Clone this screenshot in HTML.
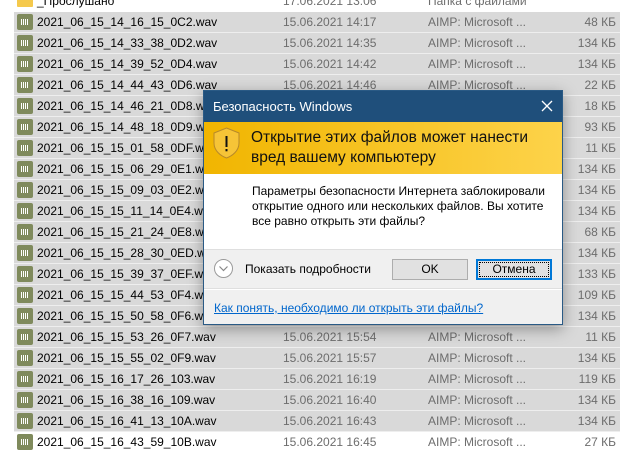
<!DOCTYPE html>
<html><head><meta charset="utf-8"><style>
*{margin:0;padding:0;box-sizing:border-box}
body{width:632px;height:450px;overflow:hidden;background:#fff;font-family:"Liberation Sans",sans-serif;font-size:12px;position:relative}
.row{position:absolute;left:14px;width:606px;height:21px;background:#d9d9d9;border-bottom:1px solid #eeeeee}
.row.w{background:#fff;border:none}
.row span{position:absolute;top:3px;white-space:nowrap}
.ic{position:absolute;left:3px;top:2px;width:16px;height:16px;background:#7f8a5c;border-radius:2px}
.ic:after{content:"";position:absolute;left:4px;top:5px;width:8px;height:6px;background:repeating-linear-gradient(90deg,#fff 0 1px,transparent 1px 2px)}
.n{left:23px;color:#000}
.d{left:269px;color:#6d6d6d}
.t{left:414px;color:#6d6d6d}
.s{right:4px;color:#6d6d6d}
.dlg{position:absolute;left:203px;top:90px;width:360px;height:235px;background:#fff;border:1px solid #2a5a85;box-shadow:0 4px 14px rgba(0,0,0,.35)}
</style></head><body>
<div class="row w" style="top:-9px"><div style="position:absolute;left:3px;top:3px;width:16px;height:13px;background:#f5c94c;border-radius:1px"></div><span class="n">_Прослушано</span><span class="d">17.06.2021 13:06</span><span class="t">Папка с файлами</span></div>
<div id="rows"></div>
<script>
var r=[["2021_06_15_14_16_15_0C2.wav","14:17","48 КБ"],["2021_06_15_14_33_38_0D2.wav","14:35","134 КБ"],["2021_06_15_14_39_52_0D4.wav","14:42","134 КБ"],["2021_06_15_14_44_43_0D6.wav","14:46","22 КБ"],["2021_06_15_14_46_21_0D8.wav","14:46","18 КБ"],["2021_06_15_14_48_18_0D9.wav","14:50","93 КБ"],["2021_06_15_15_01_58_0DF.wav","15:02","11 КБ"],["2021_06_15_15_06_29_0E1.wav","15:08","134 КБ"],["2021_06_15_15_09_03_0E2.wav","15:10","134 КБ"],["2021_06_15_15_11_14_0E4.wav","15:13","134 КБ"],["2021_06_15_15_21_24_0E8.wav","15:22","68 КБ"],["2021_06_15_15_28_30_0ED.wav","15:30","134 КБ"],["2021_06_15_15_39_37_0EF.wav","15:41","133 КБ"],["2021_06_15_15_44_53_0F4.wav","15:46","109 КБ"],["2021_06_15_15_50_58_0F6.wav","15:52","134 КБ"],["2021_06_15_15_53_26_0F7.wav","15:54","11 КБ"],["2021_06_15_15_55_02_0F9.wav","15:57","134 КБ"],["2021_06_15_16_17_26_103.wav","16:19","119 КБ"],["2021_06_15_16_38_16_109.wav","16:40","134 КБ"],["2021_06_15_16_41_13_10A.wav","16:43","134 КБ"],["2021_06_15_16_43_59_10B.wav","16:45","27 КБ"]];
var h="";r.forEach(function(x,i){h+='<div class="row'+(i==20?' w':'')+'" style="top:'+(12+i*21)+'px"><div class="ic"></div><span class="n">'+x[0]+'</span><span class="d">15.06.2021 '+x[1]+'</span><span class="t">AIMP: Microsoft ...</span><span class="s">'+x[2]+'</span></div>'});
document.getElementById("rows").innerHTML=h;
</script>
<div class="dlg">
<div style="position:absolute;left:0;top:0;width:358px;height:31px;background:#1f4f7b;color:#fff;font-size:13px;padding:8px 0 0 9px">Безопасность Windows
<svg style="position:absolute;right:9px;top:9px" width="12" height="12"><path d="M1 1L11 11M11 1L1 11" stroke="#fff" stroke-width="1.3"/></svg></div>
<div style="position:absolute;left:0;top:31px;width:358px;height:52px;background:linear-gradient(90deg,#f1b500,#fdd34a)">
<svg style="position:absolute;left:9px;top:5px" width="27" height="32"><path d="M13.5 1L26 6V16C26 24 19 29 13.5 31C8 29 1 24 1 16V6Z" fill="#f6c437" stroke="#b7892a" stroke-width="1"/><rect x="12.5" y="9" width="2" height="11" fill="#111"/><rect x="12.5" y="22" width="2" height="2.3" fill="#111"/></svg>
<div style="position:absolute;left:47px;top:6px;font-size:15.5px;line-height:20px;color:#111">Открытие этих файлов может нанести<br>вред вашему компьютеру</div></div>
<div style="position:absolute;left:48px;top:93px;font-size:12px;line-height:15px;color:#000">Параметры безопасности Интернета заблокировали<br>открытие одного или нескольких файлов. Вы хотите<br>все равно открыть эти файлы?</div>
<div style="position:absolute;left:0;top:158px;width:358px;height:40px;background:#f0f0f0;border-top:1px solid #dfdfdf;border-bottom:1px solid #dfdfdf">
<div style="position:absolute;left:10px;top:9px;width:19px;height:19px;border:1px solid #9a9a9a;border-radius:50%;background:#fff"><svg width="17" height="17" style="position:absolute;left:0;top:0"><path d="M4.5 6.5L8.5 10.5L12.5 6.5" fill="none" stroke="#888" stroke-width="1.2"/></svg></div>
<div style="position:absolute;left:41px;top:12px;color:#000">Показать подробности</div>
<div style="position:absolute;left:188px;top:9px;width:76px;height:21px;background:#e1e1e1;border:1px solid #adadad;text-align:center;line-height:19px">OK</div>
<div style="position:absolute;left:272px;top:9px;width:76px;height:21px;background:#e1e1e1;border:2px solid #0078d7;text-align:center;line-height:17px"><div style="position:absolute;inset:1px;border:1px dotted #000"></div>Отмена</div>
</div>
<div style="position:absolute;left:0;top:199px;width:358px;height:34px;background:#f0f0f0"></div>
<div style="position:absolute;left:10px;top:210px;color:#0066cc;text-decoration:underline">Как понять, необходимо ли открыть эти файлы?</div>
</div>
</body></html>
